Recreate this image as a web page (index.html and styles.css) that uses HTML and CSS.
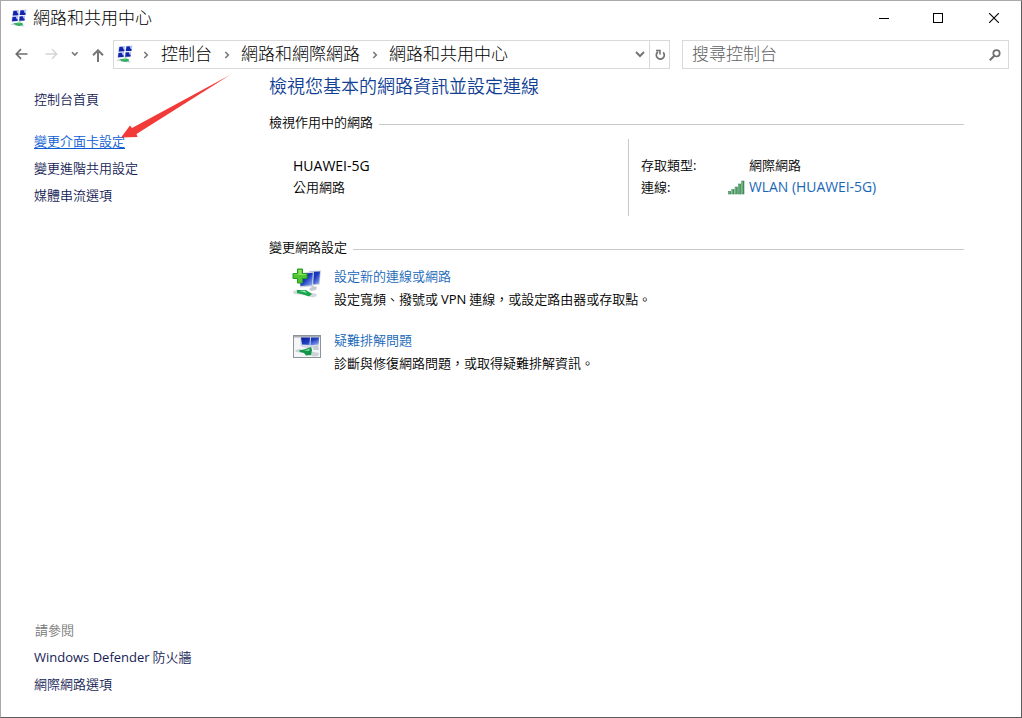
FILE: index.html
```
<!DOCTYPE html>
<html lang="zh-Hant">
<head>
<meta charset="utf-8">
<title>網路和共用中心</title>
<link rel="stylesheet" href="styles.css">
</head>
<body>
<svg class="defs" width="0" height="0" aria-hidden="true">
  <defs>
    <linearGradient id="screen" x1="0" y1="0" x2="1" y2="1">
      <stop offset="0" stop-color="#0a1a96"/><stop offset=".5" stop-color="#1f3fc4"/><stop offset="1" stop-color="#9db8f4"/>
    </linearGradient>
    <linearGradient id="bar" x1="0" y1="0" x2="1" y2="0">
      <stop offset="0" stop-color="#8fd0a0"/><stop offset="1" stop-color="#2c7a45"/>
    </linearGradient>
    <symbol id="center" viewBox="0 0 18 18">
      <path d="M0 15.500l4-1.500 11 2.500-1.500 1-5-.5z" fill="#c9d3d8"/>
      <path d="M3.500 14.500l5-1 4 .5.500 2-4 1-3.500-1z" fill="#2fae5c"/>
      <path d="M8 12.500l3-.5-.5 2-3 .5z" fill="#9be0b0"/>
      <path d="M3 1.500l6-.5-.7 5.500-6 .3z M10 1l6.500-.5-1 5.500-6.200.3z M2 7.500l6.200-.4-.5 5-6.200.6z M9.300 7l6-.3-.8 5.300-5.900.2z" fill="#b3c0f1"/>
      <path d="M3.500 2l3-.2 1 2.400 1 .6-.3 1.500-5.500.2z M10.500 1.500l3-.2 1.200 2.700 1 .4-.4 1.500-5.500.2z M2.600 8l3-.2 1.200 2.400 1 .4-.3 1.400-5.500.3z M9.800 7.500l2.800-.2 1.200 2.500 1 .3-.4 1.500-5.200.2z" fill="#1225a8"/>
    </symbol>
    <symbol id="next" viewBox="0 0 6 8">
      <path d="M1.300 1L4.300 4l-3 3" fill="none" stroke="#777" stroke-width="1.600"/>
    </symbol>
  </defs>
</svg>
<div class="window">
  <header class="titlebar">
    <svg class="app-icon" width="18" height="18"><use href="#center"/></svg>
    <h1 class="title">網路和共用中心</h1>
    <div class="controls">
      <svg width="10" height="10"><path d="M0 5.500h10" stroke="#000"/></svg>
      <svg width="10" height="10"><rect x=".5" y=".5" width="9" height="9" fill="none" stroke="#000"/></svg>
      <svg width="10" height="10"><path d="M0 0l10 10M10 0L0 10" stroke="#000" stroke-width="1.100"/></svg>
    </div>
  </header>

  <nav class="navbar">
    <div class="nav-buttons">
      <svg width="13" height="12" class="back"><path d="M12.500 6H1.500M6 1.200L1.300 6 6 10.800" fill="none" stroke="#6e6e6e" stroke-width="1.700"/></svg>
      <svg width="13" height="12" class="forward"><path d="M.5 6h11M7 1.200L11.700 6 7 10.800" fill="none" stroke="#d4d4d4" stroke-width="1.500"/></svg>
      <svg width="8" height="6" class="recent"><path d="M1 1.200l2.800 2.800 2.800-2.800" fill="none" stroke="#777" stroke-width="1.600"/></svg>
      <svg width="12" height="13" class="up"><path d="M6 13V1.500M1 6.300l5-5 5 5" fill="none" stroke="#777" stroke-width="2"/></svg>
    </div>
    <div class="address">
      <svg class="address-icon" width="18" height="18"><use href="#center"/></svg>
      <svg class="sep" width="6" height="8"><use href="#next"/></svg>
      <span class="crumb">控制台</span>
      <svg class="sep" width="6" height="8"><use href="#next"/></svg>
      <span class="crumb">網路和網際網路</span>
      <svg class="sep" width="6" height="8"><use href="#next"/></svg>
      <span class="crumb">網路和共用中心</span>
      <svg class="expand" width="10" height="7"><path d="M1 1l4 4 4-4" fill="none" stroke="#777" stroke-width="2"/></svg>
      <span class="refresh"><svg width="11" height="12"><path d="M8.200 3.300A4 4 0 1 1 3 2.800" fill="none" stroke="#707070" stroke-width="1.700"/><path d="M1 1.500h4v4" fill="none" stroke="#707070" stroke-width="1.500"/></svg></span>
    </div>
    <div class="search">
      <span class="crumb">搜尋控制台</span>
      <svg width="12" height="12"><circle cx="7.500" cy="4.300" r="3.200" fill="none" stroke="#6e6e6e" stroke-width="1.700"/><path d="M5.300 6.700L.8 11.200" stroke="#6e6e6e" stroke-width="2"/></svg>
    </div>
  </nav>

  <div class="content">
    <aside class="sidebar">
      <a class="side-link home">控制台首頁</a>
      <a class="side-link active">變更介面卡設定</a>
      <a class="side-link">變更進階共用設定</a>
      <a class="side-link">媒體串流選項</a>
      <div class="see-also">
        <span class="see-title">請參閱</span>
        <a class="side-link"><span class="latin defender">Windows Defender</span> 防火牆</a>
        <a class="side-link">網際網路選項</a>
      </div>
    </aside>

    <main class="main">
      <h2 class="heading">檢視您基本的網路資訊並設定連線</h2>
      <div class="section-title"><span>檢視作用中的網路</span><i class="rule"></i></div>
      <section class="network">
        <div class="network-name">
          <strong class="latin ssid">HUAWEI-5G</strong>
          <span>公用網路</span>
        </div>
        <div class="network-details">
          <span class="label">存取類型:</span><span></span><span class="label">網際網路</span>
          <span>連線:</span>
          <svg width="17" height="15"><g fill="url(#bar)" stroke="#3f8a58" stroke-width=".6"><rect x=".5" y="11.500" width="2.300" height="2.500"/><rect x="3.800" y="9.500" width="2.300" height="4.500"/><rect x="7.100" y="7" width="2.300" height="7"/><rect x="10.400" y="4" width="2.300" height="10"/><rect x="13.700" y="1" width="2.300" height="13"/></g></svg>
          <a class="link latin wlan">WLAN (HUAWEI-5G)</a>
        </div>
      </section>

      <div class="section-title"><span>變更網路設定</span><i class="rule"></i></div>
      <section class="task">
        <svg width="30" height="32" viewBox="0 0 30 32">
          <path d="M17 3l12-.5-1.500 14-8 1z" fill="#c7ccd3"/><path d="M18 4l10-.5-1 12-8 1z" fill="url(#screen)"/>
          <path d="M7 5l15-1.500-1 15-13 1z" fill="#d2d7e0"/><path d="M8 6l12.800-1.200-.8 12.500L8.500 18z" fill="url(#screen)"/>
          <path d="M21 18l4 1-1 3-5 1-2-2z" fill="#c5c9cf"/>
          <path d="M1 23.500l4-2 20 4.500-1 2.500-4 1-5-2.500-13-1z" fill="#d3d8dc"/>
          <path d="M5 22l9 0 6 4-3 2.500-6-2-6-1.500z" fill="#18a44c"/><path d="M7 23l6-.5 2 2.500z" fill="#8be1aa"/>
          <path d="M5.500 1h5v4.500H15v5h-4.500V15h-5v-4.500H1v-5h4.500z" fill="#4fc52f" stroke="#259a22"/><path d="M6.500 2h3v4H14v1H2V6.500h4.500z" fill="#9be96f" opacity=".75"/>
        </svg>
        <div class="task-text">
          <a class="link">設定新的連線或網路</a>
          <p>設定寬頻、撥號或 <span class="latin vpn">VPN</span> 連線，或設定路由器或存取點。</p>
        </div>
      </section>
      <section class="task">
        <svg width="30" height="32" viewBox="0 0 30 32">
          <rect x="1.500" y="3.500" width="27" height="22" fill="#f4f6f8" stroke="#8d9499"/>
          <path d="M2 4h26v1.500H2z" fill="#a9afb5"/>
          <path d="M8 5.500h19l-.5 10-10 1-8-2z" fill="#d3dae6"/><path d="M9 5.500h9l-.5 7.500-7.500-.5z M19 5.500h8l-.5 7-8 .8z" fill="url(#screen)"/>
          <path d="M22 14h4l1 4h-6z" fill="#c4cbd3"/>
          <path d="M3 18.500l4-1.500 20 4-1 3-5 .5-7-3.500-10-1z" fill="#ccd4d8"/>
          <path d="M7 18.500l5-1 7-2.500 1 3-1 5-5 .5-2-2.500-4-1z" fill="#129548"/><path d="M12 18.500l6-2-1 2.500z" fill="#7edaa0"/>
        </svg>
        <div class="task-text">
          <a class="link">疑難排解問題</a>
          <p>診斷與修復網路問題，或取得疑難排解資訊。</p>
        </div>
      </section>
    </main>
  </div>
  <svg class="pointer" width="112" height="70" viewBox="0 0 112 70"><path d="M110 1L16.500 60l1 3L1 63.500 10 51.500l2 2.500z" fill="#f23a38"/></svg>
</div>
</body>
</html>
```

FILE: styles.css
```
* { box-sizing: border-box; }

body {
  margin: 0;
  background: #fff;
  font: 350 13px/21px "Noto Sans CJK TC", "Open Sans", sans-serif;
  color: #000;
}

h1, h2, p { margin: 0; font-weight: inherit; }
svg { display: block; flex: none; }
.defs { position: absolute; }
.latin { font-family: "Open Sans", "Noto Sans", sans-serif; font-weight: 400; }

.window {
  position: relative;
  display: flex;
  flex-direction: column;
  width: 1022px;
  height: 718px;
  border: 1px solid #a9a9a9;
  border-right-color: #5c5c5c;
  border-bottom-color: #5c5c5c;
  background: #fff;
  overflow: hidden;
}

.titlebar {
  display: flex;
  align-items: center;
  height: 35px;
  padding-left: 9px;
}
.app-icon { margin-bottom: 1px; }
.title { margin-left: 5px; padding-bottom: 4px; font-size: 17px; line-height: 30px; font-weight: 300; }
.controls { display: flex; gap: 46px; margin-left: auto; padding: 0 22px 2px 0; }
.controls svg:first-child { margin-right: -2px; }

.navbar { display: flex; align-items: center; height: 37px; }
.nav-buttons { display: flex; align-items: center; width: 112px; padding: 0 0 1px 14px; }
.forward { margin-left: 17px; }
.recent { margin-left: 13px; }
.up { margin-left: 13px; margin-top: 2px; }

.address {
  display: flex;
  align-items: center;
  width: 557px;
  height: 29px;
  padding-left: 2px;
  border: 1px solid #d9d9d9;
  font-size: 17px;
  font-weight: 300;
}
.address-icon { margin-bottom: 1px; }
.address .sep { margin: 0 11px 0 12px; }
.address .address-icon + .sep { margin: 0 12px 0 9px; }
.crumb { padding-bottom: 3px; line-height: 24px; }
.expand { margin-left: auto; margin-right: 4px; }
.refresh {
  display: flex;
  align-items: center;
  justify-content: center;
  width: 20px;
  height: 27px;
  padding-left: 1px;
  border-left: 1px solid #d9d9d9;
}

.search {
  display: flex;
  align-items: center;
  justify-content: space-between;
  width: 327px;
  height: 29px;
  margin-left: 12px;
  padding: 0 7px 0 9px;
  border: 1px solid #d9d9d9;
  font-size: 17px;
  font-weight: 300;
  color: #606060;
}

.content { display: flex; flex: 1; }
.sidebar {
  display: flex;
  flex-direction: column;
  width: 268px;
  padding: 12px 0 20px 33px;
}
.side-link { height: 27px; line-height: 27px; color: #151c55; }
.home { margin-bottom: 15px; }
.active { color: #0b5bd3; text-decoration: underline; text-underline-offset: 2px; }
.see-also { display: flex; flex-direction: column; margin-top: auto; }
.see-title { padding-left: 1px; line-height: 27px; color: #777; }
.defender { line-height: 1; }

.main { width: 695px; }
.heading { margin-top: -1px; font-size: 18px; line-height: 26px; color: #123f96; }
.section-title { display: flex; align-items: center; gap: 6px; height: 20px; margin-top: 15px; }
.section-title span { padding-bottom: 3px; line-height: 17px; }
.rule { flex: 1; height: 1px; margin-top: 3px; background: #c9c9c9; }

.network { display: flex; height: 77px; margin-top: 6px; margin-bottom: 22px; }
.network-name { display: flex; flex-direction: column; width: 359px; padding: 16px 0 0 24px; }
.ssid { font-size: 14px; font-weight: 500; }
.network-details {
  display: grid;
  grid-template-columns: 87px 21px 1fr;
  grid-auto-rows: 21px;
  align-content: start;
  padding: 16px 0 0 12px;
  border-left: 1px solid #c9c9c9;
}
.network-details svg { margin-top: 4px; }
.label { margin-top: -1px; }
.wlan { font-size: 13.9px; }

.link { color: #1767b8; }
.task { display: flex; gap: 12px; height: 64px; padding: 7px 0 0 23px; }
.task > svg { margin-top: 3px; }
.task-text { display: flex; flex-direction: column; gap: 2px; }

.pointer { position: absolute; left: 119px; top: 73px; }
```
